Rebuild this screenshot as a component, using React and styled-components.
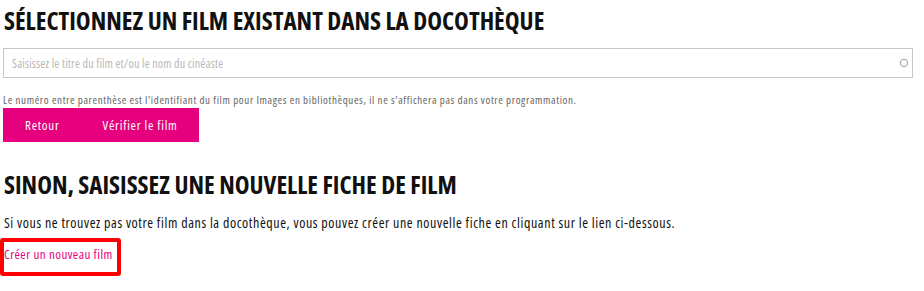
import React from 'react';
import styled, { createGlobalStyle } from 'styled-components';

const GlobalStyle = createGlobalStyle`
    body {
        margin: 0;
        background: #ffffff;
        font-family: "Open Sans", "Noto Sans", sans-serif;
        font-stretch: condensed;
        color: #111111;
    }
`;

const Page = styled.div`
    padding: 0 11px 0 3px;
`;

const Heading = styled.h2`
    margin: ${(p) => p.$top}px 0 0 1px;
    font-size: 25px;
    line-height: 36px;
    font-weight: 700;
    text-transform: uppercase;
    color: #111111;
`;

const SearchBox = styled.div`
    display: flex;
    align-items: center;
    margin-top: 10px;
    height: 30px;
    border: 1px solid #c6c6c6;
    box-sizing: border-box;
    padding: 0 3px 0 8px;
`;

const SearchInput = styled.input`
    flex: 1;
    border: none;
    outline: none;
    font-family: inherit;
    font-stretch: inherit;
    font-size: 12px;
    letter-spacing: 0.2px;
    color: #333333;
    background: transparent;
    padding: 0;

    &::placeholder {
        color: #b8b8b8;
    }
`;

const Help = styled.p`
    margin: 14px 0 0 0;
    font-size: 11px;
    letter-spacing: 0.62px;
    line-height: 16px;
    color: #666666;
`;

const ButtonRow = styled.div`
    display: flex;
`;

const Button = styled.button`
    height: 34px;
    padding: 0 21px 0 22px;
    border: none;
    background: #e6007e;
    color: #ffffff;
    font-family: inherit;
    font-stretch: inherit;
    font-size: 13px;
    letter-spacing: 0.75px;
    cursor: pointer;
`;

const Text = styled.p`
    margin: 11px 0 0 1px;
    font-size: 14px;
    letter-spacing: 0.6px;
    line-height: 20px;
    color: #111111;
`;

const Highlight = styled.div`
    display: inline-block;
    margin: 5px 0 0 -3px;
    border: 4px solid #ff0000;
    border-radius: 3px;
    padding: 4px 4px 10px 0;
    font-size: 13px;
    line-height: 16px;
`;

const NewLink = styled.a`
    letter-spacing: 0.45px;
    color: #e6007e;
    text-decoration: none;
`;

function App() {
    return (
        <Page>
            <GlobalStyle />
            <Heading $top={2}>Sélectionnez un film existant dans la docothèque</Heading>
            <SearchBox>
                <SearchInput placeholder="Saisissez le titre du film et/ou le nom du cinéaste" />
                <svg width="10" height="10" viewBox="0 0 10 10">
                    <circle cx="5" cy="5" r="3.6" fill="none" stroke="#b0b0b0" strokeWidth="1.3" />
                </svg>
            </SearchBox>
            <Help>
                Le numéro entre parenthèse est l'identifiant du film pour Images en bibliothèques, il ne s'affichera pas dans votre programmation.
            </Help>
            <ButtonRow>
                <Button>Retour</Button>
                <Button>Vérifier le film</Button>
            </ButtonRow>
            <Heading $top={24}>Sinon, saisissez une nouvelle fiche de film</Heading>
            <Text>
                Si vous ne trouvez pas votre film dans la docothèque, vous pouvez créer une nouvelle fiche en cliquant sur le lien ci-dessous.
            </Text>
            <Highlight>
                <NewLink href="#">Créer un nouveau film</NewLink>
            </Highlight>
        </Page>
    );
}

export default App;
